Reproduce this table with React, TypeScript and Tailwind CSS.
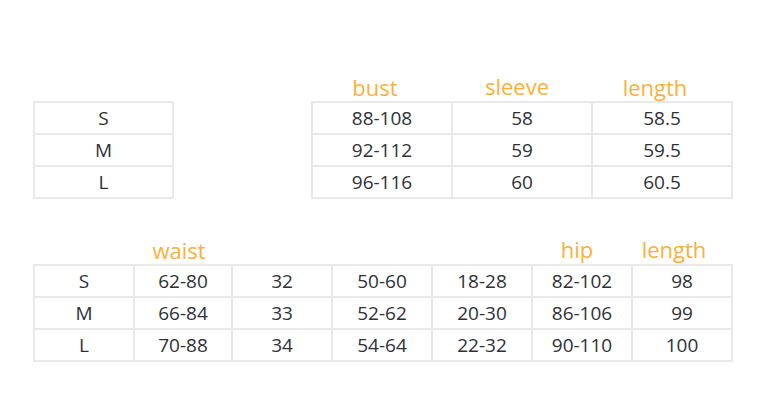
const sizes = ['S', 'M', 'L'];

const topRows = [
  ['88-108', '58', '58.5'],
  ['92-112', '59', '59.5'],
  ['96-116', '60', '60.5'],
];

const bottomRows = [
  ['S', '62-80', '32', '50-60', '18-28', '82-102', '98'],
  ['M', '66-84', '33', '52-62', '20-30', '86-106', '99'],
  ['L', '70-88', '34', '54-64', '22-32', '90-110', '100'],
];

const cell =
  'h-[32px] flex items-center justify-center border-r-2 border-b-2 border-[#e9e9e9] text-[19px] text-[#2f3136]';

function Label({ text, className = '' }: { text: string; className?: string }) {
  return (
    <div className={`flex justify-center text-[22px] leading-[28px] text-[#fbb03b] ${className}`}>
      {text}
    </div>
  );
}

export default function App() {
  return (
    <div className="w-[760px] h-[410px] bg-white pt-[73px] pl-[33px] font-['Open_Sans',sans-serif]">
      {/* upper chart */}
      <div className="flex items-end">
        <div className="w-[141px] border-l-2 border-t-2 border-[#e9e9e9]">
          {sizes.map((s) => (
            <div key={s} className={cell}>
              {s}
            </div>
          ))}
        </div>
        <div className="ml-[137px]">
          <div className="grid grid-cols-[140px_140px_140px]">
            <Label text="bust" className="pr-[12px]" />
            <Label text="sleeve" className="pr-[8px] -translate-y-[1px]" />
            <Label text="length" className="pr-[12px]" />
          </div>
          <div className="grid grid-cols-[140px_140px_140px] border-l-2 border-t-2 border-[#e9e9e9]">
            {topRows.flat().map((v, i) => (
              <div key={i} className={cell}>
                {v}
              </div>
            ))}
          </div>
        </div>
      </div>

      {/* lower chart */}
      <div className="mt-[37px] w-[700px]">
        <div className="grid grid-cols-[100px_98px_100px_100px_100px_100px_100px] h-[28px]">
          <div />
          <Label text="waist" className="pr-[6px]" />
          <div />
          <div />
          <div />
          <Label text="hip" className="pr-[8px] -translate-y-[1px]" />
          <Label text="length" className="pr-[14px] -translate-y-[1px]" />
        </div>
        <div className="grid grid-cols-[100px_98px_100px_100px_100px_100px_100px] border-l-2 border-t-2 border-[#e9e9e9]">
          {bottomRows.flat().map((v, i) => (
            <div key={i} className={cell}>
              {v}
            </div>
          ))}
        </div>
      </div>
    </div>
  );
}
